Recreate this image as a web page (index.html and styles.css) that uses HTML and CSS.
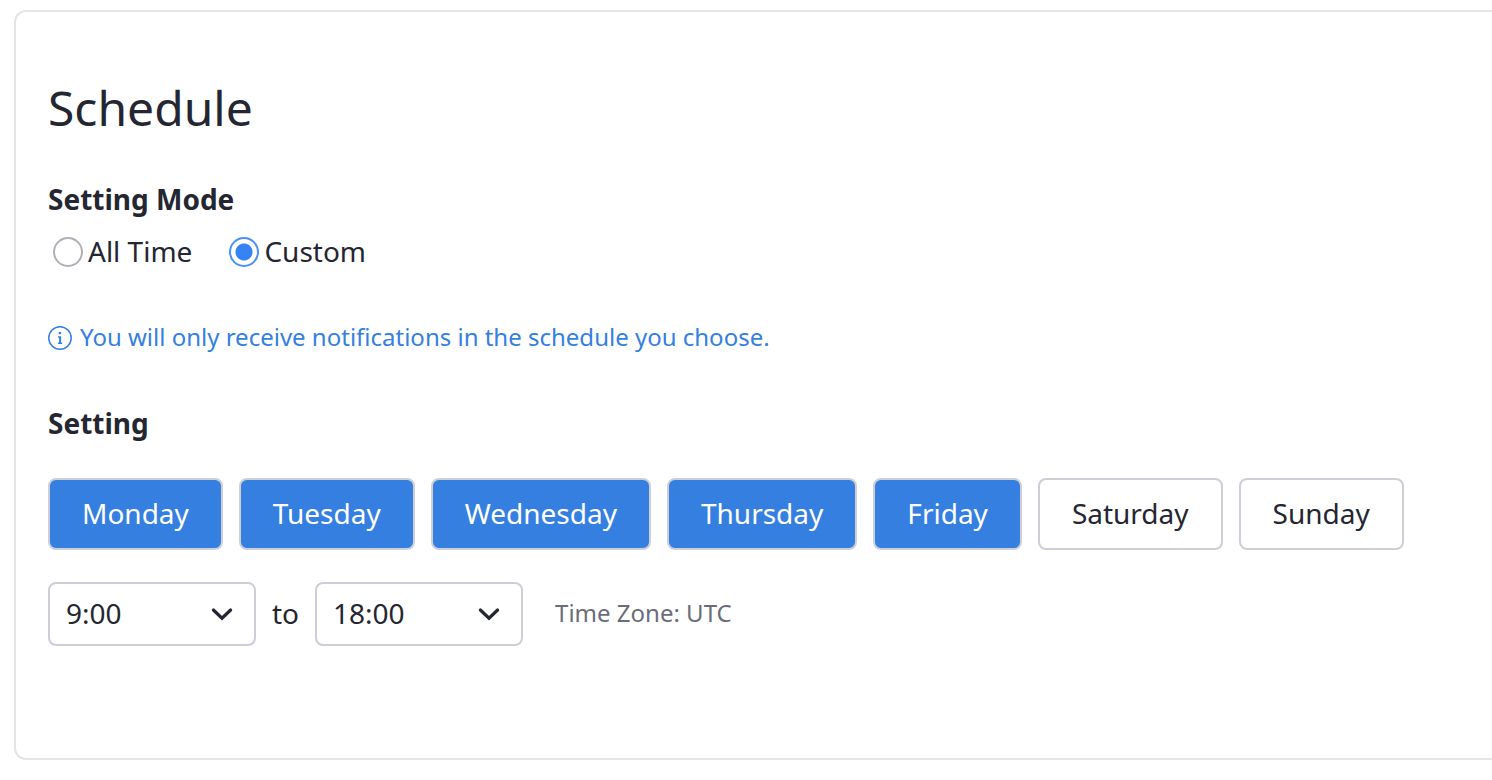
FILE: index.html
```html
<!DOCTYPE html>
<html lang="en">
<head>
<meta charset="utf-8">
<title>Schedule</title>
<link rel="stylesheet" href="styles.css">
</head>
<body>
<main class="panel">
  <h1 class="title">Schedule</h1>
  <fieldset class="mode">
    <legend class="label">Setting Mode</legend>
    <div class="mode-options">
      <label class="option"><input class="radio" type="radio" name="mode">All Time</label>
      <label class="option"><input class="radio" type="radio" name="mode" checked>Custom</label>
    </div>
  </fieldset>
  <p class="hint">
    <svg class="hint-icon" viewBox="0 0 24 24" aria-hidden="true"><circle cx="12" cy="12" r="11.2" fill="none" stroke="currentColor" stroke-width="1.5"/><path d="M10.7 6h2.4v2.2h-2.4zM10 10.2h3.1v6.3h1v1.5h-4v-1.5h1v-4.8H10z" fill="currentColor"/></svg>
    You will only receive notifications in the schedule you choose.
  </p>
  <h2 class="label">Setting</h2>
  <div class="days">
    <button class="day day-on" type="button" aria-pressed="true">Monday</button>
    <button class="day day-on" type="button" aria-pressed="true">Tuesday</button>
    <button class="day day-on" type="button" aria-pressed="true">Wednesday</button>
    <button class="day day-on" type="button" aria-pressed="true">Thursday</button>
    <button class="day day-on" type="button" aria-pressed="true">Friday</button>
    <button class="day" type="button" aria-pressed="false">Saturday</button>
    <button class="day" type="button" aria-pressed="false">Sunday</button>
  </div>
  <div class="hours">
    <div class="picker">
      <select class="select" aria-label="Start time"><option>9:00</option></select>
      <svg class="chevron" viewBox="0 0 24 24" aria-hidden="true"><path d="M3.4 8l8.6 8.2L20.600 8" fill="none" stroke="currentColor" stroke-width="3.2" stroke-linecap="round"/></svg>
    </div>
    <span class="hours-text">to</span>
    <div class="picker">
      <select class="select" aria-label="End time"><option>18:00</option></select>
      <svg class="chevron" viewBox="0 0 24 24" aria-hidden="true"><path d="M3.4 8l8.6 8.2L20.600 8" fill="none" stroke="currentColor" stroke-width="3.2" stroke-linecap="round"/></svg>
    </div>
    <span class="hours-text zone">Time Zone: UTC</span>
  </div>
</main>
</body>
</html>
```
FILE: styles.css
```css
* { box-sizing: border-box; }
body {
  margin: 0;
  padding: 10px 0 20px 14px;
  background: #fff;
  color: #242631;
  font: 28px/38px "Noto Sans", sans-serif;
}
.panel {
  border: 2px solid #e5e5e5;
  border-right: 0;
  border-radius: 12px 0 0 12px;
  padding: 64px 32px 112px;
}
.title { margin: 0 0 40px; font-size: 48px; font-weight: 400; line-height: 64px; }
.label { margin: 0; padding: 0; font-size: 28px; font-weight: 700; line-height: 38px; }
.mode { margin: 0; padding: 0; border: 0; }
.mode-options { display: flex; gap: 37px; padding: 14px 0 0 5px; }
.option { display: flex; align-items: center; gap: 5px; }
.radio {
  appearance: none;
  width: 30px;
  height: 30px;
  margin: 2px 0 0;
  border: 2px solid #afb0b8;
  border-radius: 50%;
  background: #fff;
}
.radio:checked { border-color: #4a90f7; background: radial-gradient(circle, #3682f6 8px, #fff 9px); }
.hint { display: flex; align-items: center; gap: 8px; margin: 50px 0; color: #347fe0; font-size: 24px; line-height: 34px; }
.hint-icon { width: 24px; height: 24px; margin-top: 2px; }
.days { display: flex; flex-wrap: wrap; gap: 16px; margin-top: 36px; }
.day {
  height: 72px;
  padding: 0 32px 2px;
  border: 2px solid #cdced6;
  border-radius: 8px;
  background: #fff;
  color: inherit;
  font: inherit;
}
.day-on { background: #347fe0; color: #fff; }
.hours { display: flex; align-items: center; gap: 16px; margin-top: 32px; }
.hours-text { padding-bottom: 2px; }
.picker { position: relative; width: 208px; }
.select {
  appearance: none;
  width: 100%;
  height: 64px;
  padding: 0 48px 2px 16px;
  border: 2px solid #cdced6;
  border-radius: 8px;
  background: #fff;
  color: inherit;
  font: inherit;
}
.chevron { position: absolute; top: 20px; right: 22px; width: 24px; height: 24px; pointer-events: none; }
.zone { margin-left: 16px; color: #6b6c7a; font-size: 24px; }
```
